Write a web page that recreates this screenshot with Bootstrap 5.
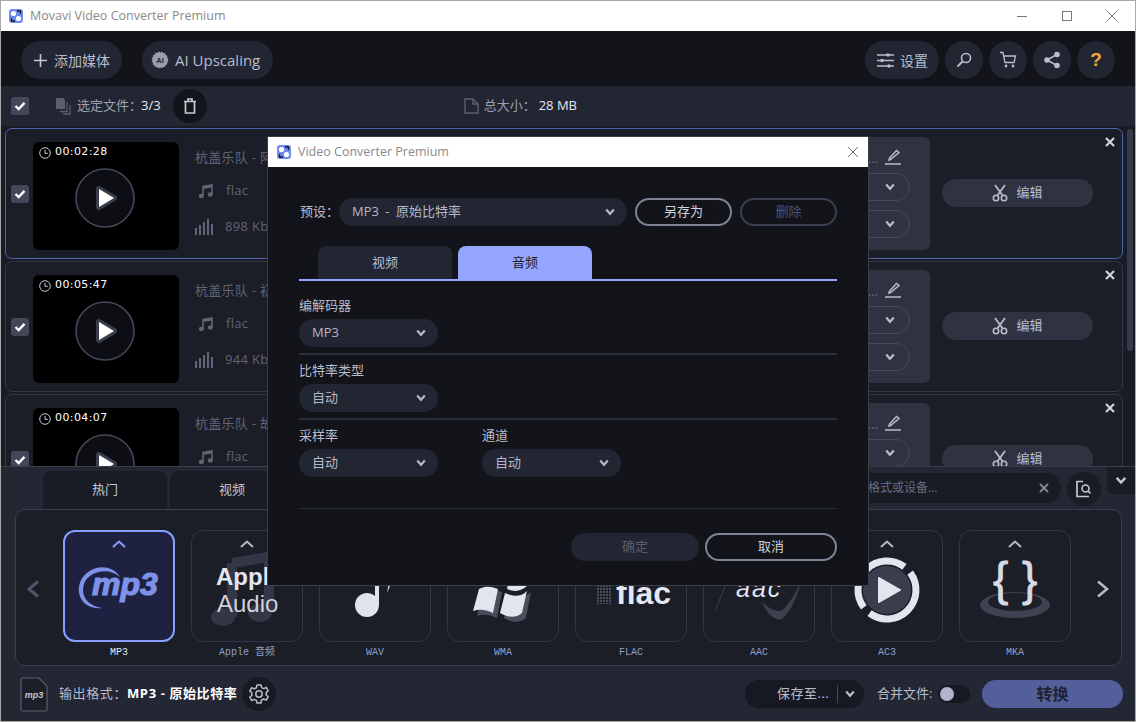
<!DOCTYPE html>
<html lang="zh-CN">
<head>
    <meta charset="UTF-8">
    <title>Movavi Video Converter Premium</title>
    <link href="https://cdn.jsdelivr.net/npm/bootstrap@5.3.0/dist/css/bootstrap.min.css" rel="stylesheet">
    <style>
        html, body { height: 100%; overflow: hidden; }
        body { background: #a9a9a9; font-family: "Open Sans", "Noto Sans CJK SC", sans-serif; font-size: 13px; color: #c4c7d6; }
        .app-win { position: relative; width: 1134px; height: 720px; margin: 1px; background: #12141a; display: flex; flex-direction: column; overflow: hidden; }
        .win-title { height: 30px; background: #fff; color: #8a8a8a; flex: none; padding-left: 8px; gap: 7px; font-size: 12.5px; }
        .win-ctrls { margin-left: auto; gap: 31px; padding-right: 16px; }

        .tool-row { height: 55px; flex: none; padding: 10px 20px 7px 20px; gap: 6px; }
        .tool-btn { height: 38px; border-radius: 19px; background: #222532; color: #b9bccc; font-size: 14px; gap: 6px; white-space: nowrap; flex: none; }
        .tool-round { width: 38px; justify-content: center; }
        .add-btn { width: 101px; padding-left: 12px; }
        .ai-btn { width: 131px; padding-left: 9px; margin-left: 14px; font-size: 15px; }
        .set-btn { width: 74px; padding-left: 12px; margin-left: auto; }
        .help-btn { color: #f2a93b; font: 800 19px "Liberation Sans", sans-serif; }

        .sel-row { height: 40px; flex: none; background: #222532; padding-left: 10px; }
        .tick-box { width: 18px; height: 18px; border-radius: 3px; background: #434757; flex: none; display: flex; align-items: center; justify-content: center; }
        .copy-ico { margin-left: 26px; }
        .sel-label { margin-left: 6px; color: #9da1b3; }
        .sel-count { margin-left: -1px; color: #e6e8f0; }
        .trash-btn { width: 34px; height: 34px; border-radius: 50%; background: #12141a; margin-left: 12px; }
        .size-ico { margin-left: 257px; }
        .size-label { margin-left: 5px; color: #9da1b3; }
        .size-val { margin-left: 3px; color: #e6e8f0; }

        .file-list { height: 340px; flex: none; background: #1a1c25; position: relative; padding: 2px 0 0 4px; overflow: hidden; }
        .list-bar { position: absolute; right: 2px; top: 3px; width: 6px; height: 222px; background: #363a4a; border-radius: 3px; }
        .file-row { position: relative; width: 1118px; height: 131px; margin-bottom: 2px; background: #1b1d27; border: 1px solid #33364a; border-radius: 7px; padding: 8px 0 0 5px; display: flex; align-items: flex-start; }
        .file-row.is-on { border-color: #4c64ac; }
        .file-row .tick-box { margin-top: 48px; }
        .thumb-box { position: relative; width: 146px; height: 108px; margin: 5px 0 0 4px; background: #000; border-radius: 6px; flex: none; }
        .thumb-clock { position: absolute; left: 6px; top: 5px; }
        .thumb-play { position: absolute; left: 42px; top: 26px; }
        .thumb-time { position: absolute; left: 22px; top: 3px; color: #fff; font: 11px "DejaVu Sans", sans-serif; letter-spacing: .4px; }
        .info-col { width: 505px; margin-left: 16px; color: #5f6478; flex: none; padding-top: 11px; letter-spacing: .3px; }
        .info-title { height: 19px; }
        .info-line { display: flex; align-items: center; gap: 12px; height: 36px; white-space: nowrap; }
        .info-first { margin-top: 6px; }
        .info-line svg { flex: none; }
        .note-ico { margin-left: 3px; }
        .side-panel { width: 230px; height: 113px; background: #2f3241; border-radius: 6px; flex: none; padding: 10px 20px 0 0; display: flex; flex-direction: column; color: #b9bccc; }
        .pencil-row { height: 26px; display: flex; justify-content: flex-end; gap: 6px; padding-right: 8px; }
        .pencil-dots { color: #6a6e82; line-height: 22px; }
        .side-pill { height: 28px; border: 1px solid #454858; border-radius: 14px; margin-bottom: 9px; display: flex; align-items: center; justify-content: flex-end; padding-right: 14px; }
        .edit-btn { width: 151px; height: 28px; border-radius: 14px; background: #2f3241; color: #b9bccc; margin: 42px 0 0 12px; gap: 8px; }
        .row-x { position: absolute; right: 7px; top: 8px; color: #d0d2dc; }

        .out-panel { flex: 1; background: #232633; border-top: 1px solid #3a3d4c; position: relative; min-height: 0; }
        .tab-line { height: 42px; padding-left: 42px; gap: 3px; }
        .cat-tab { width: 124px; height: 42px; background: #1a1c25; border-radius: 8px 8px 0 0; color: #c4c7d6; margin-top: 4px; padding-bottom: 4px; }
        .find-box { position: absolute; left: 700px; top: 6px; width: 360px; height: 30px; border-radius: 15px; background: #1a1c25; color: #696d80; font-size: 12px; padding: 0 12px 0 167px; }
        .find-x { color: #7c8092; }
        .find-btn { position: absolute; left: 1066px; top: 5px; width: 34px; height: 34px; border-radius: 50%; background: #1a1c25; }
        .fold-btn { position: absolute; right: 0; top: 0; width: 28px; height: 27px; background: #1a1c25; border-radius: 0 0 0 6px; color: #c4c7d6; }
        .fmt-frame { position: relative; margin: 0 13px 0 14px; height: 157px; background: #1b1d27; border: 1px solid #3b3e4e; border-radius: 10px; padding: 20px 0 0 47px; gap: 16px; z-index: 1; }
        .fmt-item { width: 112px; flex: none; }
        .fmt-card { width: 112px; height: 112px; border: 1px solid #31344a; border-radius: 12px; background: #1b1d27; display: block; overflow: hidden; color: #b4b8ca; }
        .fmt-item.is-on .fmt-card { border: 2px solid #8a9eff; background: #1e2240; color: #8a9eff; }
        .fmt-name { text-align: center; font: 10px/12px "Liberation Mono", "Noto Sans CJK SC", monospace; color: #8ea0c8; margin-top: 5px; }
        .fmt-item.is-on .fmt-name { color: #e4e6f0; }
        .nav-arrow { position: absolute; top: 70px; }
        .nav-prev { left: 10px; }
        .nav-next { right: 11px; }

        .out-bar { height: 56px; padding: 0 12px 0 19px; }
        .out-label { margin-left: 11px; color: #b9bccc; letter-spacing: .6px; }
        .out-label b { color: #fff; }
        .gear-btn { width: 34px; height: 34px; border-radius: 50%; background: #181a22; margin-left: 5px; }
        .save-btn { width: 119px; height: 28px; border-radius: 14px; background: #171922; color: #b9bccc; margin-left: auto; letter-spacing: .5px; padding: 0 9px 0 32px; }
        .save-sep { width: 1px; height: 18px; background: #454858; margin-left: auto; margin-right: 7px; }
        .merge-txt { width: 56px; margin-left: 13px; color: #b9bccc; white-space: nowrap; }
        .merge-tog { width: 32px; height: 18px; border-radius: 9px; background: #171922; margin-left: 5px; padding-left: 2px; }
        .merge-tog i { width: 14px; height: 14px; border-radius: 50%; background: #b0b4cc; display: block; }
        .go-btn { width: 141px; height: 28px; border-radius: 14px; background: #535f9a; color: #1e2233; font-weight: 700; font-size: 16px; margin-left: 12px; }

        .dlg-box { position: absolute; left: 266px; top: 135px; width: 602px; height: 450px; background: #12141a; border: 1px solid #3b3e4a; z-index: 5; }
        .dlg-title { height: 30px; background: #fff; color: #8a8a8a; padding: 0 9px; gap: 7px; font-size: 12.5px; flex: none; }
        .dlg-body { padding: 31px 31px 0; }
        .dlg-label { height: 20px; line-height: 20px; color: #b9bccc; margin-bottom: 4px; }
        .preset-label { width: 40px; padding-left: 1px; color: #b9bccc; white-space: nowrap; }
        .pick-box { height: 28px; border-radius: 14px; background: #222532; color: #b4b8ca; padding: 0 12px 0 13px; }
        .pick-box svg { margin-left: auto; }
        .pick-wide { width: 288px; word-spacing: 3px; }
        .pick-small { width: 139px; }
        .line-btn { height: 28px; border-radius: 14px; border: 2px solid #7f8396; color: #d0d2dc; }
        .line-btn.is-off { border-color: #3b3f50; color: #50546a; }
        .preset-btn { width: 97px; margin-left: 8px; }
        .dlg-tabs { margin: 20px 0 0 19px; gap: 6px; }
        .dlg-tab { width: 134px; height: 33px; border-radius: 8px 8px 0 0; background: #222532; color: #b9bccc; }
        .dlg-tab.is-on { background: #94a6ff; color: #1a1c25; }
        .dlg-tabline { height: 2px; background: #94a6ff; margin-bottom: 14px; }
        .dlg-rule { height: 2px; background: #2a2d3a; margin: 6px 0 5px; }
        .dlg-pair { gap: 44px; }
        .dlg-thin { height: 1px; background: #2a2d3a; margin-top: 31px; }
        .dlg-foot { margin-top: 24px; gap: 6px; }
        .dlg-ok { width: 128px; height: 28px; border-radius: 14px; background: #222532; color: #5a5e72; }
        .dlg-cancel { width: 132px; }
    </style>
</head>
<body>
<svg width="0" height="0" class="position-absolute">
    <defs>
        <pattern id="dotgrid" width="3" height="3" patternUnits="userSpaceOnUse"><rect width="2" height="2" fill="#4b4e5c"/></pattern>
    </defs>
    <symbol id="chev" viewBox="0 0 10 8"><path d="M1.2 1.6 5 5.8 8.8 1.6" fill="none" stroke="currentColor" stroke-width="2.2"/></symbol>
    <symbol id="cross" viewBox="0 0 10 10"><path d="M1 1 9 9M9 1 1 9" stroke="currentColor" stroke-width="2.2"/></symbol>
    <symbol id="tick" viewBox="0 0 12 10"><path d="M1.5 5 4.6 8 10.5 1.8" fill="none" stroke="#fff" stroke-width="2.4"/></symbol>
    <symbol id="movavi" viewBox="0 0 14 14"><rect width="14" height="14" rx="3" fill="#6f8bf0"/><circle cx="4.5" cy="4.5" r="2.6" fill="#fff"/><circle cx="9.5" cy="9.5" r="2.6" fill="#fff"/><path d="M8 2h3.5v3M6 12H2.500V9" fill="none" stroke="#10182f" stroke-width="1.300"/></symbol>
    <symbol id="note" viewBox="0 0 16 16"><path d="M5 13V3.500L14 2v9.500" fill="none" stroke="#5f6478" stroke-width="1.600"/><ellipse cx="3.300" cy="13" rx="2.500" ry="2.200" fill="#5f6478"/><ellipse cx="12.300" cy="11.500" rx="2.500" ry="2.200" fill="#5f6478"/><path d="M5 3.500 14 2v2.500L5 6z" fill="#5f6478"/></symbol>
    <symbol id="bars" viewBox="0 0 18 16"><path d="M1 16V9M5 16V6M9 16V3M13 16V0M17 16V5" stroke="#5f6478" stroke-width="2" fill="none"/></symbol>
    <symbol id="clock" viewBox="0 0 12 12"><circle cx="6" cy="6" r="5.300" fill="none" stroke="#c8cad4" stroke-width="1"/><path d="M6 2.800V6.300H8.800" fill="none" stroke="#c8cad4"/></symbol>
    <symbol id="playbig" viewBox="0 0 60 60"><circle cx="30" cy="30" r="29" fill="#0d0e13" stroke="#454858" stroke-width="1.600"/><path d="M24 21 39 30 24 39Z" fill="#fff" stroke="#3a3d4c" stroke-width="6" stroke-linejoin="round" paint-order="stroke"/></symbol>
    <symbol id="pencil" viewBox="0 0 18 18"><path d="M6.500 12.500 5 13l.5-2L12.500 3.500 15 5.500ZM1 17H17" fill="none" stroke="#b9bccc" stroke-width="1.500"/></symbol>
    <symbol id="scissors" viewBox="0 0 16 18"><path d="M3 1 11 12M13 1 5 12" stroke="#b9bccc" stroke-width="1.800" fill="none"/><circle cx="4" cy="14" r="2.700" fill="none" stroke="#b9bccc" stroke-width="1.600"/><circle cx="12" cy="14" r="2.700" fill="none" stroke="#b9bccc" stroke-width="1.600"/></symbol>
    <symbol id="capup" viewBox="0 0 14 8"><path d="M1 7 7 1.500 13 7" fill="none" stroke="currentColor" stroke-width="2"/></symbol>
</svg>

<div class="app-win">
    <div class="win-title d-flex align-items-center">
        <svg width="14" height="14"><use href="#movavi"/></svg>
        <span>Movavi Video Converter Premium</span>
        <div class="win-ctrls d-flex align-items-center">
            <svg width="14" height="14"><path d="M2 7.500H12" stroke="#777"/></svg>
            <svg width="14" height="14"><rect x="2.500" y="2.500" width="9" height="9" fill="none" stroke="#777"/></svg>
            <svg width="14" height="14"><path d="M1.500 1.500 12.500 12.500M12.500 1.500 1.500 12.500" stroke="#777"/></svg>
        </div>
    </div>

    <div class="tool-row d-flex">
        <div class="tool-btn add-btn d-flex align-items-center">
            <svg width="15" height="15" viewBox="0 0 15 15"><path d="M7.500 1V14M1 7.500H14" stroke="#c4c7d6" stroke-width="1.600"/></svg>添加媒体
        </div>
        <div class="tool-btn ai-btn d-flex align-items-center">
            <svg width="18" height="18" viewBox="0 0 18 18"><circle cx="9" cy="9" r="7.500" fill="#9a9db0" stroke="#9a9db0" stroke-width="1.500" stroke-dasharray="2 1"/><text x="9" y="12" font-size="7.500" font-weight="700" text-anchor="middle" fill="#222532" font-family="Liberation Sans">AI</text></svg>
            <span>AI Upscaling</span>
        </div>
        <div class="tool-btn set-btn d-flex align-items-center">
            <svg width="17" height="17" viewBox="0 0 17 17"><path d="M0 3H17M0 8.500H17M0 14H17" stroke="#b9bccc" stroke-width="1.400"/><circle cx="11" cy="3" r="1.800" fill="#b9bccc"/><circle cx="5" cy="8.500" r="1.800" fill="#b9bccc"/><circle cx="12" cy="14" r="1.800" fill="#b9bccc"/></svg>设置
        </div>
        <div class="tool-btn tool-round d-flex align-items-center">
            <svg width="16" height="16" viewBox="0 0 16 16"><circle cx="10" cy="6" r="4.500" fill="none" stroke="#b9bccc" stroke-width="1.600"/><path d="M6.500 9.500 1.500 14.500" stroke="#b9bccc" stroke-width="2"/></svg>
        </div>
        <div class="tool-btn tool-round d-flex align-items-center">
            <svg width="18" height="18" viewBox="0 0 18 18"><path d="M1 1.500H4L6 11.500H15L16.500 5H4.800" fill="none" stroke="#b9bccc" stroke-width="1.300"/><circle cx="7" cy="15" r="1.400" fill="#b9bccc"/><circle cx="14" cy="15" r="1.400" fill="#b9bccc"/></svg>
        </div>
        <div class="tool-btn tool-round d-flex align-items-center">
            <svg width="16" height="18" viewBox="0 0 16 18"><path d="M13 3.500 3 9 13 14.500" fill="none" stroke="#b9bccc" stroke-width="1.600"/><circle cx="13" cy="3.500" r="2.800" fill="#b9bccc"/><circle cx="3" cy="9" r="2.800" fill="#b9bccc"/><circle cx="13" cy="14.500" r="2.800" fill="#b9bccc"/></svg>
        </div>
        <div class="tool-btn tool-round help-btn d-flex align-items-center">?</div>
    </div>

    <div class="sel-row d-flex align-items-center">
        <div class="tick-box"><svg width="12" height="10"><use href="#tick"/></svg></div>
        <svg class="copy-ico" width="16" height="18" viewBox="0 0 16 18"><path d="M1 1H8L10 3V12H1Z" fill="#5a5e70"/><path d="M12 5V14.500H5M15 8V17H8" fill="none" stroke="#5a5e70" stroke-width="1.300"/></svg>
        <span class="sel-label">选定文件：</span>
        <span class="sel-count">3/3</span>
        <div class="trash-btn d-flex align-items-center justify-content-center">
            <svg width="14" height="16" viewBox="0 0 14 16"><path d="M1 3.500H13M5 3.500V1H9V3.500M2.500 3.500V15H11.500V3.500" fill="none" stroke="#c4c7d6" stroke-width="1.700"/></svg>
        </div>
        <svg class="size-ico" width="15" height="16" viewBox="0 0 15 16"><path d="M1 1H9L14 6V15H1Z M9 1V6H14" fill="none" stroke="#5a5e70" stroke-width="1.400"/></svg>
        <span class="size-label">总大小：</span>
        <span class="size-val">28 MB</span>
    </div>

    <div class="file-list">
        <div class="list-bar"></div>
        <div class="file-row is-on">
            <div class="tick-box"><svg width="12" height="10"><use href="#tick"/></svg></div>
            <div class="thumb-box">
                <svg class="thumb-clock" width="12" height="12"><use href="#clock"/></svg>
                <span class="thumb-time">00:02:28</span>
                <svg class="thumb-play" width="60" height="60"><use href="#playbig"/></svg>
            </div>
            <div class="info-col">
                <div class="info-title text-truncate">杭盖乐队 - 阿</div>
                <div class="info-line info-first"><svg class="note-ico" width="16" height="16"><use href="#note"/></svg><span>flac</span></div>
                <div class="info-line"><svg width="18" height="16"><use href="#bars"/></svg><span>898 Kb</span></div>
            </div>
            <div class="side-panel">
                <div class="pencil-row"><span class="pencil-dots">...</span><svg width="18" height="18"><use href="#pencil"/></svg></div>
                <div class="side-pill"><svg width="10" height="8"><use href="#chev"/></svg></div>
                <div class="side-pill"><svg width="10" height="8"><use href="#chev"/></svg></div>
            </div>
            <div class="edit-btn d-flex align-items-center justify-content-center"><svg width="16" height="18"><use href="#scissors"/></svg>编辑</div>
            <svg class="row-x" width="10" height="10"><use href="#cross"/></svg>
        </div>
        <div class="file-row">
            <div class="tick-box"><svg width="12" height="10"><use href="#tick"/></svg></div>
            <div class="thumb-box">
                <svg class="thumb-clock" width="12" height="12"><use href="#clock"/></svg>
                <span class="thumb-time">00:05:47</span>
                <svg class="thumb-play" width="60" height="60"><use href="#playbig"/></svg>
            </div>
            <div class="info-col">
                <div class="info-title text-truncate">杭盖乐队 - 初</div>
                <div class="info-line info-first"><svg class="note-ico" width="16" height="16"><use href="#note"/></svg><span>flac</span></div>
                <div class="info-line"><svg width="18" height="16"><use href="#bars"/></svg><span>944 Kb</span></div>
            </div>
            <div class="side-panel">
                <div class="pencil-row"><span class="pencil-dots">...</span><svg width="18" height="18"><use href="#pencil"/></svg></div>
                <div class="side-pill"><svg width="10" height="8"><use href="#chev"/></svg></div>
                <div class="side-pill"><svg width="10" height="8"><use href="#chev"/></svg></div>
            </div>
            <div class="edit-btn d-flex align-items-center justify-content-center"><svg width="16" height="18"><use href="#scissors"/></svg>编辑</div>
            <svg class="row-x" width="10" height="10"><use href="#cross"/></svg>
        </div>
        <div class="file-row">
            <div class="tick-box"><svg width="12" height="10"><use href="#tick"/></svg></div>
            <div class="thumb-box">
                <svg class="thumb-clock" width="12" height="12"><use href="#clock"/></svg>
                <span class="thumb-time">00:04:07</span>
                <svg class="thumb-play" width="60" height="60"><use href="#playbig"/></svg>
            </div>
            <div class="info-col">
                <div class="info-title text-truncate">杭盖乐队 - 故</div>
                <div class="info-line info-first"><svg class="note-ico" width="16" height="16"><use href="#note"/></svg><span>flac</span></div>
            </div>
            <div class="side-panel">
                <div class="pencil-row"><span class="pencil-dots">...</span><svg width="18" height="18"><use href="#pencil"/></svg></div>
                <div class="side-pill"><svg width="10" height="8"><use href="#chev"/></svg></div>
                <div class="side-pill"><svg width="10" height="8"><use href="#chev"/></svg></div>
            </div>
            <div class="edit-btn d-flex align-items-center justify-content-center"><svg width="16" height="18"><use href="#scissors"/></svg>编辑</div>
            <svg class="row-x" width="10" height="10"><use href="#cross"/></svg>
        </div>
    </div>

    <div class="out-panel">
        <div class="tab-line d-flex">
            <div class="cat-tab d-flex align-items-center justify-content-center">热门</div>
            <div class="cat-tab d-flex align-items-center justify-content-center">视频</div>
        </div>
        <div class="find-box d-flex align-items-center">
            <span class="text-nowrap">格式或设备...</span>
            <svg class="find-x ms-auto" width="10" height="10"><use href="#cross"/></svg>
        </div>
        <div class="find-btn d-flex align-items-center justify-content-center">
            <svg width="18" height="18" viewBox="0 0 18 18"><path d="M8 1.500H2V16.500H14" fill="none" stroke="#c4c7d6" stroke-width="1.700"/><circle cx="10.500" cy="8.500" r="3.500" fill="none" stroke="#c4c7d6" stroke-width="1.600"/><path d="M13 11 15.500 13.500" stroke="#c4c7d6" stroke-width="1.600"/></svg>
        </div>
        <div class="fold-btn d-flex align-items-center justify-content-center"><svg width="12" height="9"><use href="#chev"/></svg></div>

        <div class="fmt-frame d-flex">
            <svg class="nav-arrow nav-prev" width="14" height="18" viewBox="0 0 14 18"><path d="M12 1.500 3 9 12 16.500" fill="none" stroke="#50546a" stroke-width="3"/></svg>
            <svg class="nav-arrow nav-next" width="14" height="18" viewBox="0 0 14 18"><path d="M2 1.500 11 9 2 16.500" fill="none" stroke="#b4b8ca" stroke-width="2.600"/></svg>

            <div class="fmt-item is-on">
                <svg class="fmt-card" viewBox="0 0 108 108">
                    <use href="#capup" x="47" y="8" width="14" height="8"/>
                    <path d="M55 45C47 31 25 32 16 48 9 63 19 78 37 76 25 74 15 66 19 52 23 40 43 34 55 45Z" fill="#7e92ea"/>
                    <text x="27" y="63" font-family="Liberation Sans" font-size="32" font-weight="700" font-style="italic" fill="#7e92ea" stroke="#7e92ea" stroke-width="1.200">mp3</text>
                </svg>
                <div class="fmt-name">MP3</div>
            </div>
            <div class="fmt-item">
                <svg class="fmt-card" viewBox="0 0 110 110">
                    <use href="#capup" x="48" y="9" width="14" height="8"/>
                    <path d="M40 32 77 26V82M40 32V86" fill="none" stroke="#333745" stroke-width="10"/>
                    <ellipse cx="31" cy="86" rx="12" ry="9" fill="#333745"/><ellipse cx="68" cy="82" rx="12" ry="9" fill="#333745"/>
                    <text x="24" y="54" font-family="Liberation Sans" font-size="24" font-weight="700" fill="#e4e6f0">Apple</text>
                    <text x="25" y="81" font-family="Liberation Sans" font-size="24" fill="#cfd1dc">Audio</text>
                </svg>
                <div class="fmt-name">Apple 音频</div>
            </div>
            <div class="fmt-item">
                <svg class="fmt-card" viewBox="0 0 110 110">
                    <ellipse cx="47" cy="74" rx="12" ry="12" fill="#e0e2ec"/>
                    <path d="M55 74V24H59V74Z" fill="#e0e2ec"/>
                    <path d="M59 24C66 36 72 42 67 62 74 48 74 38 59 24Z" fill="#e0e2ec"/>
                </svg>
                <div class="fmt-name">WAV</div>
            </div>
            <div class="fmt-item">
                <svg class="fmt-card" viewBox="0 0 110 110">
                    <path d="M28 82 34 58C42 54 48 56 53 58L48 84C40 80 34 80 28 82ZM55 84 60 60C68 64 76 64 82 58L77 84C70 90 62 88 55 84Z" fill="#4a4d5c" transform="translate(1 3)"/>
                    <path d="M25 80 31 58C39 54 45 56 50 58L45 82C37 78 31 78 25 80ZM52 82 57 62C65 66 73 66 79 60L74 82C67 88 59 86 52 82Z" fill="#e2e4ee"/>
                    <path d="M33 50 38 28C46 24 52 26 57 28L52 53C45 49 39 48 33 50ZM59 58 64 30C71 34 78 34 85 28L80 54C73 61 66 61 59 58Z" fill="#e2e4ee"/>
                </svg>
                <div class="fmt-name">WMA</div>
            </div>
            <div class="fmt-item">
                <svg class="fmt-card" viewBox="0 0 110 110">
                    <rect x="20" y="52" width="15" height="21" fill="url(#dotgrid)"/>
                    <text x="40" y="73" font-family="Liberation Sans" font-size="32" font-weight="700" fill="#e4e6f0">flac</text>
                </svg>
                <div class="fmt-name">FLAC</div>
            </div>
            <div class="fmt-item">
                <svg class="fmt-card" viewBox="0 0 110 110">
                    <path d="M11 80 24 48" stroke="#3c3f4e" stroke-width="1" fill="none"/>
                    <path d="M58 70C62 84 72 90 78 88 88 80 94 62 97 50 90 66 82 78 76 80 70 80 62 76 58 70Z" fill="#3c3f4e"/>
                    <text x="32" y="66" font-family="Liberation Sans" font-size="25" font-style="italic" fill="#e4e6f0" letter-spacing="2">aac</text>
                </svg>
                <div class="fmt-name">AAC</div>
            </div>
            <div class="fmt-item">
                <svg class="fmt-card" viewBox="0 0 110 110">
                    <use href="#capup" x="48" y="9" width="14" height="8"/>
                    <circle cx="55" cy="59" r="24" fill="#3a3d4c"/>
                    <path d="M31.840 76.450A29 29 0 0 1 72.450 35.840M78.160 41.550A29 29 0 0 1 37.550 82.160" fill="none" stroke="#e2e4ee" stroke-width="7"/>
                    <path d="M47 47 68 59 47 71Z" fill="#e2e4ee" stroke="#e2e4ee" stroke-width="2" stroke-linejoin="round"/>
                </svg>
                <div class="fmt-name">AC3</div>
            </div>
            <div class="fmt-item">
                <svg class="fmt-card" viewBox="0 0 110 110">
                    <use href="#capup" x="48" y="9" width="14" height="8"/>
                    <ellipse cx="55" cy="74" rx="35" ry="13" fill="#3f4252"/>
                    <ellipse cx="55" cy="71" rx="27" ry="9" fill="#1c1e28"/>
                    <text x="33" y="64" font-family="Liberation Sans" font-size="46" fill="#d8dae4" stroke="#d8dae4" stroke-width=".8">{</text>
                    <text x="62" y="64" font-family="Liberation Sans" font-size="46" fill="#d8dae4" stroke="#d8dae4" stroke-width=".8">}</text>
                </svg>
                <div class="fmt-name">MKA</div>
            </div>
        </div>

        <div class="out-bar d-flex align-items-center">
            <svg width="28" height="35" viewBox="0 0 28 35" class="flex-shrink-0"><path d="M1 2.500Q1 1 2.500 1H19L27 9V32.500Q27 34 25.500 34H2.500Q1 34 1 32.500Z" fill="#1c1e28" stroke="#5a5e70" stroke-width="1.200"/><text x="14" y="21" text-anchor="middle" font-family="Liberation Sans" font-size="9" font-weight="700" font-style="italic" fill="#c4c7d6">mp3</text></svg>
            <span class="out-label text-nowrap">输出格式：<b>MP3 - 原始比特率</b></span>
            <div class="gear-btn d-flex align-items-center justify-content-center">
                <svg width="22" height="22" viewBox="0 0 22 22"><path d="M9 2h4l.6 2.600 2.200 1 2.400-1.200 2 3.400-2 1.800v2.400l2 1.800-2 3.400-2.400-1.200-2.200 1L13 20H9l-.6-2.600-2.200-1-2.400 1.200-2-3.400 2-1.800V9.800l-2-1.800 2-3.400 2.400 1.200 2.200-1Z" fill="none" stroke="#b9bccc" stroke-width="1.500" stroke-linejoin="round"/><circle cx="11" cy="11" r="3.200" fill="none" stroke="#b9bccc" stroke-width="1.500"/></svg>
            </div>
            <div class="save-btn d-flex align-items-center">
                <span class="text-nowrap">保存至...</span><span class="save-sep"></span><svg width="10" height="8"><use href="#chev"/></svg>
            </div>
            <span class="merge-txt">合并文件:</span>
            <div class="merge-tog d-flex align-items-center"><i></i></div>
            <div class="go-btn d-flex align-items-center justify-content-center">转换</div>
        </div>
    </div>

    <div class="dlg-box d-flex flex-column">
        <div class="dlg-title d-flex align-items-center">
            <svg width="14" height="14"><use href="#movavi"/></svg>
            <span>Video Converter Premium</span>
            <svg width="12" height="12" class="ms-auto"><path d="M1 1 11 11M11 1 1 11" stroke="#777"/></svg>
        </div>
        <div class="dlg-body">
            <div class="d-flex align-items-center">
                <span class="preset-label">预设：</span>
                <div class="pick-box pick-wide d-flex align-items-center"><span>MP3 - 原始比特率</span><svg width="10" height="8"><use href="#chev"/></svg></div>
                <div class="line-btn preset-btn d-flex align-items-center justify-content-center">另存为</div>
                <div class="line-btn is-off preset-btn d-flex align-items-center justify-content-center">删除</div>
            </div>
            <div class="dlg-tabs d-flex">
                <div class="dlg-tab d-flex align-items-center justify-content-center">视频</div>
                <div class="dlg-tab is-on d-flex align-items-center justify-content-center">音频</div>
            </div>
            <div class="dlg-tabline"></div>

            <div class="dlg-label">编解码器</div>
            <div class="pick-box pick-small d-flex align-items-center"><span>MP3</span><svg width="10" height="8"><use href="#chev"/></svg></div>
            <div class="dlg-rule"></div>

            <div class="dlg-label">比特率类型</div>
            <div class="pick-box pick-small d-flex align-items-center"><span>自动</span><svg width="10" height="8"><use href="#chev"/></svg></div>
            <div class="dlg-rule"></div>

            <div class="dlg-pair d-flex">
                <div>
                    <div class="dlg-label">采样率</div>
                    <div class="pick-box pick-small d-flex align-items-center"><span>自动</span><svg width="10" height="8"><use href="#chev"/></svg></div>
                </div>
                <div>
                    <div class="dlg-label">通道</div>
                    <div class="pick-box pick-small d-flex align-items-center"><span>自动</span><svg width="10" height="8"><use href="#chev"/></svg></div>
                </div>
            </div>
            <div class="dlg-thin"></div>
            <div class="dlg-foot d-flex justify-content-end">
                <div class="dlg-ok d-flex align-items-center justify-content-center">确定</div>
                <div class="line-btn dlg-cancel d-flex align-items-center justify-content-center">取消</div>
            </div>
        </div>
    </div>
</div>
<script src="https://cdn.jsdelivr.net/npm/bootstrap@5.3.0/dist/js/bootstrap.bundle.min.js"></script>
</body>
</html>
